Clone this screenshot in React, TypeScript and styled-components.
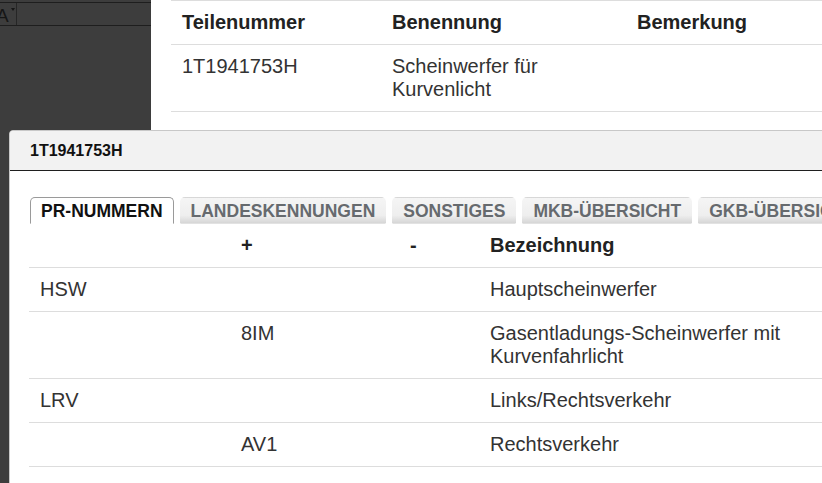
import React from "react";
import styled, { createGlobalStyle } from "styled-components";

const GlobalStyle = createGlobalStyle`
  html, body {
    margin: 0;
    padding: 0;
    overflow: hidden;
    background: #ffffff;
  }
  body {
    font-family: "Liberation Sans", Arial, sans-serif;
    color: #333333;
  }
`;

const Page = styled.div`
  position: relative;
  display: flex;
  width: 822px;
  height: 483px;
  overflow: hidden;
`;

const SidePanel = styled.aside`
  flex: 0 0 151px;
  background: #3d3d3d;
  padding-top: 2px;
  box-sizing: border-box;
`;

const Toolbar = styled.div`
  display: flex;
  height: 22px;
  border-top: 1px solid #1e1e1e;
  border-bottom: 1px solid #1e1e1e;
`;

const ToolButton = styled.div`
  position: relative;
  width: 17px;
  border-right: 1px solid #262626;
  overflow: hidden;
  box-sizing: border-box;
`;

const GlyphA = styled.span`
  position: absolute;
  left: -4px;
  top: 3px;
  font-size: 19px;
  line-height: 19px;
  color: #161616;
`;

const Caret = styled.span`
  position: absolute;
  right: 1px;
  top: 5px;
  width: 0;
  height: 0;
  border-left: 2.5px solid transparent;
  border-right: 2.5px solid transparent;
  border-top: 3px solid #161616;
`;

const Main = styled.main`
  flex: 1 1 auto;
  min-width: 0;
  padding-left: 20px;
`;

const DataTable = styled.table<{ $width: number }>`
  width: ${(p) => p.$width}px;
  border-collapse: collapse;
  table-layout: fixed;
  font-size: 20px;
  line-height: 23px;
  color: #333333;
`;

const HeadCell = styled.th`
  padding: 10px 11px;
  text-align: left;
  font-weight: bold;
  color: #222222;
  vertical-align: top;
`;

const Cell = styled.td`
  padding: 10px 11px;
  vertical-align: top;
`;

const Row = styled.tr<{ $top?: boolean }>`
  border-bottom: 1px solid #dddddd;
  ${(p) => (p.$top ? "border-top: 1px solid #dddddd;" : "")}
`;

const Dialog = styled.section`
  position: absolute;
  left: 9px;
  top: 130px;
  width: 880px;
  bottom: -4px;
  background: #ffffff;
  border: 1px solid #c8c8c8;
  border-top-left-radius: 4px;
  overflow: hidden;
`;

const DialogHeader = styled.header`
  display: flex;
  align-items: center;
  height: 39px;
  padding-left: 20px;
  background: #f2f2f2;
  border-bottom: 1px solid #1f1f1f;
  font-size: 16px;
  font-weight: bold;
  color: #111111;
`;

const DialogBody = styled.div`
  padding: 26px 0 0 19px;
`;

const TabList = styled.div`
  display: flex;
  gap: 6px;
  padding-left: 1px;
  white-space: nowrap;
`;

const Tab = styled.div<{ $active?: boolean }>`
  padding: 3px 10px 2px;
  font-size: 17.5px;
  line-height: 20px;
  font-weight: bold;
  border-radius: 5px 5px 0 0;
  box-sizing: border-box;
  ${(p) =>
    p.$active
      ? `
    background: #ffffff;
    color: #111111;
    border: 1px solid #9a9a9a;
    border-bottom: 1px solid #ffffff;
  `
      : `
    background: linear-gradient(#f5f5f5 0%, #eeeeee 70%, #d6d6d6 100%);
    color: #666a6e;
    border: 1px solid transparent;
    border-bottom: 1px solid #e2e2e2;
  `}
`;

const topColumns = [210, 245, 320];
const dialogColumns = [201, 169, 80, 400];
const sum = (a: number[]) => a.reduce((s, n) => s + n, 0);

const prRows = [
  { pr: "HSW", plus: "", minus: "", text: "Hauptscheinwerfer" },
  { pr: "", plus: "8IM", minus: "", text: "Gasentladungs-Scheinwerfer mit Kurvenfahrlicht" },
  { pr: "LRV", plus: "", minus: "", text: "Links/Rechtsverkehr" },
  { pr: "", plus: "AV1", minus: "", text: "Rechtsverkehr" },
];

const tabs = ["PR-NUMMERN", "LANDESKENNUNGEN", "SONSTIGES", "MKB-ÜBERSICHT", "GKB-ÜBERSICHT"];

export default function App() {
  return (
    <>
      <GlobalStyle />
      <Page>
        <SidePanel>
          <Toolbar>
            <ToolButton>
              <GlyphA>A</GlyphA>
              <Caret />
            </ToolButton>
          </Toolbar>
        </SidePanel>
        <Main>
          <DataTable $width={sum(topColumns)}>
            <colgroup>
              {topColumns.map((w, i) => (
                <col key={i} style={{ width: w }} />
              ))}
            </colgroup>
            <thead>
              <Row $top>
                <HeadCell>Teilenummer</HeadCell>
                <HeadCell>Benennung</HeadCell>
                <HeadCell>Bemerkung</HeadCell>
              </Row>
            </thead>
            <tbody>
              <Row>
                <Cell>1T1941753H</Cell>
                <Cell>Scheinwerfer für Kurvenlicht</Cell>
                <Cell></Cell>
              </Row>
            </tbody>
          </DataTable>
        </Main>
        <Dialog>
          <DialogHeader>1T1941753H</DialogHeader>
          <DialogBody>
            <TabList>
              {tabs.map((t, i) => (
                <Tab key={t} $active={i === 0}>
                  {t}
                </Tab>
              ))}
            </TabList>
            <DataTable $width={sum(dialogColumns)}>
              <colgroup>
                {dialogColumns.map((w, i) => (
                  <col key={i} style={{ width: w }} />
                ))}
              </colgroup>
              <thead>
                <Row>
                  <HeadCell></HeadCell>
                  <HeadCell>+</HeadCell>
                  <HeadCell>-</HeadCell>
                  <HeadCell>Bezeichnung</HeadCell>
                </Row>
              </thead>
              <tbody>
                {prRows.map((r, i) => (
                  <Row key={i}>
                    <Cell>{r.pr}</Cell>
                    <Cell>{r.plus}</Cell>
                    <Cell>{r.minus}</Cell>
                    <Cell>{r.text}</Cell>
                  </Row>
                ))}
              </tbody>
            </DataTable>
          </DialogBody>
        </Dialog>
      </Page>
    </>
  );
}
